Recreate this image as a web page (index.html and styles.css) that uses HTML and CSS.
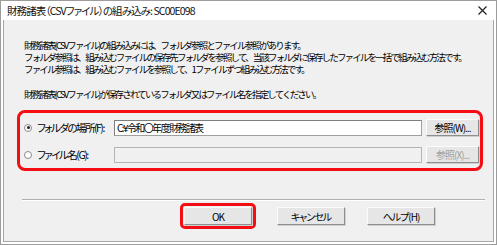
FILE: index.html
```html
<!DOCTYPE html>
<html lang="ja">
<head>
    <meta charset="UTF-8">
    <title>財務諸表（CSVファイル）の組み込み</title>
    <link rel="stylesheet" href="styles.css">
</head>
<body>
    <div class="window">
        <div class="titlebar">
            <span class="title">財務諸表（CSVファイル）の組み込み: SC00E098</span>
            <svg class="close" width="9" height="9" viewBox="0 0 9 9">
                <path d="M0.5 0.5 L8.5 8.5 M8.5 0.5 L0.5 8.5" stroke="#222" stroke-width="1.2" fill="none"/>
            </svg>
        </div>

        <div class="client">
            <div class="desc">
                <p>財務諸表(CSVファイル)の組み込みには、フォルダ参照とファイル参照があります。</p>
                <p>フォルダ参照は、組み込むファイルの保存先フォルダを参照して、当該フォルダに保存したファイルを一括で組み込む方法です。</p>
                <p>ファイル参照は、組み込むファイルを参照して、1ファイルずつ組み込む方法です。</p>
                <p class="note">財務諸表(CSVファイル)が保存されているフォルダ又はファイル名を指定してください。</p>
            </div>

            <div class="group">
                <label class="option"><span class="radio checked"></span>フォルダの場所(F):</label>
                <div class="field">C:¥令和〇年度財務諸表</div>
                <button class="btn small">参照(W)...</button>

                <label class="option"><span class="radio"></span>ファイル名(G):</label>
                <div class="field disabled"></div>
                <button class="btn small" disabled>参照(X)...</button>
            </div>

            <div class="sep"></div>

            <div class="actions">
                <span class="highlight"><button class="btn">OK</button></span>
                <button class="btn">キャンセル</button>
                <button class="btn">ヘルプ(H)</button>
            </div>
        </div>
    </div>
</body>
</html>
```

FILE: styles.css
```css
* {
    box-sizing: border-box;
}

body {
    margin: 0;
    font-family: "Noto Sans CJK JP", "Liberation Sans", sans-serif;
    font-size: 11px;
    color: #000;
    background: #fff;
}

.window {
    width: 497px;
    height: 245px;
    border: 1px solid #9c9c9c;
    background: #fff;
    display: flex;
    flex-direction: column;
}

.titlebar {
    height: 19px;
    display: flex;
    align-items: center;
    justify-content: space-between;
    padding: 0 9px 0 6px;
}

.title {
    font-size: 10.5px;
    letter-spacing: -0.9px;
    font-feature-settings: "palt";
    color: #111;
}

.client {
    flex: 1;
    margin: 0 2px 2px;
    border: 1px solid #a6a6a6;
    border-top: none;
    background: #f0f0f0;
}

.desc {
    padding: 19px 0 0 20px;
    font-size: 9.5px;
    letter-spacing: -1.85px;
}

.desc p {
    margin: 0;
    line-height: 12px;
    white-space: nowrap;
}

.desc .note {
    margin-top: 13px;
}

.group {
    margin: 10px 10px 0 13px;
    height: 61px;
    border: 3px solid #f50d14;
    border-radius: 8px;
    padding: 6px 0 0 4px;
    display: grid;
    grid-template-columns: 86px 308px 53px;
    grid-auto-rows: 17px;
    column-gap: 4px;
    row-gap: 10px;
    align-items: center;
}

.option {
    display: flex;
    align-items: center;
    gap: 5px;
    white-space: nowrap;
    font-size: 10.5px;
    font-feature-settings: "palt";
    letter-spacing: -1.5px;
}

.radio {
    width: 8px;
    height: 8px;
    border: 1px solid #8a8a8a;
    border-radius: 50%;
    background: #fff;
    display: flex;
    align-items: center;
    justify-content: center;
}

.radio.checked::after {
    content: "";
    width: 3px;
    height: 3px;
    border-radius: 50%;
    background: #222;
}

.field {
    height: 16px;
    border: 1px solid #a0a0a0;
    border-top-color: #7e7e7e;
    border-left-color: #7e7e7e;
    background: #fff;
    padding: 0 2px;
    line-height: 14px;
    font-size: 10px;
    letter-spacing: -1.6px;
    font-feature-settings: "palt";
    white-space: nowrap;
}

.field.disabled {
    background: #f0f0f0;
    border-color: #b4b4b4;
}

.btn {
    font-family: inherit;
    font-size: 10px;
    letter-spacing: -1px;
    font-feature-settings: "palt";
    width: 68px;
    height: 18px;
    padding: 0;
    background: #e6e6e6;
    color: #000;
    border: 1px solid;
    border-color: #fbfbfb #8d8d8d #8d8d8d #fbfbfb;
    box-shadow: 1px 1px 0 #cfcfcf;
}

.btn.small {
    width: 53px;
    height: 17px;
}

.btn:disabled {
    color: #a0a0a0;
}

.sep {
    margin: 28px 8px 0 18px;
    height: 2px;
    border-top: 1px solid #b0b0b0;
    border-bottom: 1px solid #fff;
}

.actions {
    margin-top: 2px;
    padding-left: 176px;
    display: flex;
    align-items: center;
    gap: 21px;
}

.actions .btn + .btn {
    margin-left: 1px;
}

.highlight {
    display: flex;
    border: 3px solid #f50d14;
    border-radius: 5px;
    padding: 1px;
}
```
